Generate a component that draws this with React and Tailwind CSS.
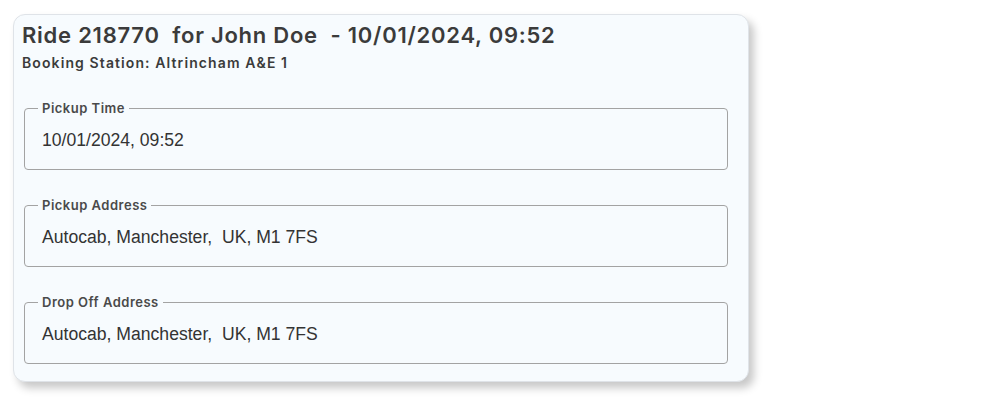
export default function App() {
  const fields = [
    { label: "Pickup Time", value: "10/01/2024, 09:52" },
    { label: "Pickup Address", value: "Autocab, Manchester,  UK, M1 7FS" },
    { label: "Drop Off Address", value: "Autocab, Manchester,  UK, M1 7FS" },
  ];

  return (
    <div className="bg-white w-[1000px] h-[397px] pt-[14px] pl-[13px]">
      <div className="w-[736px] h-[368px] bg-[#f7fbfe] border border-[#dfe3e8] rounded-[12px] shadow-[5px_6px_8px_rgba(0,0,0,0.22)] pl-[8px] pr-[20px] pt-[5px]">
        <h1 className="font-['Inter',sans-serif] font-semibold text-[22px] leading-[30px] text-[#3b3b3b] whitespace-pre tracking-[0.75px]">
          {"Ride 218770  for John Doe  - 10/01/2024, 09:52"}
        </h1>
        <h2 className="font-['Inter',sans-serif] font-semibold text-[14px] leading-[20px] text-[#3b3b3b] mt-[3px] tracking-[1.1px]">
          Booking Station: Altrincham A&amp;E 1
        </h2>
        <div className="flex flex-col gap-[26px] mt-[26px] pl-[2px]">
          {fields.map((f) => (
            <fieldset
              key={f.label}
              className="border border-[#a3a3a3] rounded-[4px] h-[71px] pl-[17px] pr-[16px]"
            >
              <legend className="px-[4px] -ml-[4px] font-['Inter',sans-serif] font-semibold text-[13px] text-[#4a4a4a] tracking-[0.5px]">
                {f.label}
              </legend>
              <div className="font-['Liberation_Sans',Arial,sans-serif] text-[17.6px] text-[#333] whitespace-pre mt-[8px]">
                {f.value}
              </div>
            </fieldset>
          ))}
        </div>
      </div>
    </div>
  );
}
